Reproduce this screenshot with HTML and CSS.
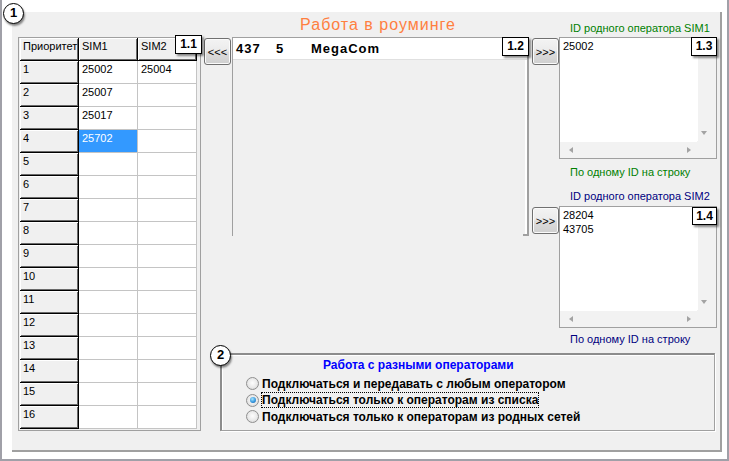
FILE: index.html
```html
<!DOCTYPE html>
<html>
<head>
<meta charset="utf-8">
<link rel="stylesheet" href="styles.css">
</head>
<body>
<div class="frame">
  <div class="num num-1">1</div>
  <div class="panel">
    <div class="grid-wrap">
      <div class="grid">
        <div class="fx">Приоритет</div><div class="fx">SIM1</div><div class="fx">SIM2</div>
        <div class="fx">1</div><div class="c">25002</div><div class="c">25004</div>
        <div class="fx">2</div><div class="c">25007</div><div class="c"></div>
        <div class="fx">3</div><div class="c">25017</div><div class="c"></div>
        <div class="fx">4</div><div class="c sel">25702</div><div class="c"></div>
        <div class="fx">5</div><div class="c"></div><div class="c"></div>
        <div class="fx">6</div><div class="c"></div><div class="c"></div>
        <div class="fx">7</div><div class="c"></div><div class="c"></div>
        <div class="fx">8</div><div class="c"></div><div class="c"></div>
        <div class="fx">9</div><div class="c"></div><div class="c"></div>
        <div class="fx">10</div><div class="c"></div><div class="c"></div>
        <div class="fx">11</div><div class="c"></div><div class="c"></div>
        <div class="fx">12</div><div class="c"></div><div class="c"></div>
        <div class="fx">13</div><div class="c"></div><div class="c"></div>
        <div class="fx">14</div><div class="c"></div><div class="c"></div>
        <div class="fx">15</div><div class="c"></div><div class="c"></div>
        <div class="fx">16</div><div class="c"></div><div class="c"></div>
      </div>
      <div class="tag tag-11">1.1</div>
    </div>
    <div class="side">
      <div class="head">
        <div class="title">Работа в роуминге</div>
        <div class="lbl green head-lbl">ID родного оператора SIM1</div>
      </div>
      <div class="main">
        <div class="mid">
          <div class="btn btn-l">&lt;&lt;&lt;</div>
          <div class="list">
            <div class="item"><span class="f1">437</span><span class="f2">5</span><span>MegaCom</span></div>
            <div class="tag tag-12">1.2</div>
          </div>
          <div class="btncol">
            <div class="btn btn-r1">&gt;&gt;&gt;</div>
            <div class="btn btn-r2">&gt;&gt;&gt;</div>
          </div>
        </div>
        <div class="right">
          <div class="memo">
            <div class="txt">25002</div>
            <div class="vs"><span class="arr-d"></span></div>
            <div class="hs"><span class="arr-l"></span><span class="arr-r"></span></div>
            <div class="corner"></div>
            <div class="tag tag-13">1.3</div>
          </div>
          <div class="lbl green hint1">По одному ID на строку</div>
          <div class="lbl navy cap2">ID родного оператора SIM2</div>
          <div class="memo memo2">
            <div class="txt">28204<br>43705</div>
            <div class="vs"><span class="arr-d"></span></div>
            <div class="hs"><span class="arr-l"></span><span class="arr-r"></span></div>
            <div class="corner"></div>
            <div class="tag tag-14">1.4</div>
          </div>
          <div class="lbl navy hint2">По одному ID на строку</div>
        </div>
      </div>
      <div class="group">
        <div class="num num-2">2</div>
        <div class="gtitle">Работа с разными операторами</div>
        <div class="opt"><span class="radio"></span><span class="otext">Подключаться и передавать с любым оператором</span></div>
        <div class="opt"><span class="radio on"></span><span class="otext focus">Подключаться только к операторам из списка</span></div>
        <div class="opt"><span class="radio"></span><span class="otext">Подключаться только к операторам из родных сетей</span></div>
      </div>
    </div>
  </div>
</div>
</body>
</html>
```
FILE: styles.css
```css
* { box-sizing: border-box; }
html, body { margin: 0; padding: 0; background: #fff; }
body {
  width: 729px; height: 461px; overflow: hidden;
  font-family: "Liberation Sans", Arial, sans-serif;
  font-size: 11px; color: #000;
}
.frame {
  position: relative;
  width: 729px; height: 461px;
  border: 2px solid #a0a0a8; border-top: 0;
  padding: 12px 5px 7px 10px;
}
.panel {
  display: flex;
  width: 710px; height: 440px;
  background: #f0f0f0;
  border-right: 2px solid #a0a0a0;
  border-bottom: 2px solid #a0a0a0;
  padding-left: 6px;
}
.num {
  position: absolute;
  width: 21px; height: 21px;
  border-radius: 50%;
  border: 1.5px solid #000;
  background: #fff;
  box-shadow: 1px 2px 2px rgba(0,0,0,.45);
  font: bold 13px/18px "Liberation Sans", Arial, sans-serif;
  text-align: center;
  z-index: 3;
}
.num-1 { left: 1px; top: 3px; }
.num-2 { left: -12px; top: -10px; }

/* grid */
.grid-wrap {
  position: relative;
  flex: none;
  margin-top: 25px; margin-right: 2px;
  width: 183px; height: 394px;
  border: 1px solid #a0a0a0;
  padding-left: 1px;
}
.grid {
  display: grid;
  grid-template-columns: repeat(3, 59px);
  grid-auto-rows: 23px;
}
.fx, .c {
  padding: 2px 0 0 3px;
  line-height: 13px;
  white-space: nowrap;
  overflow: hidden;
  color: #000;
}
.fx {
  background: #f0f0f0;
  border-right: 1px solid #000;
  border-bottom: 1px solid #000;
  box-shadow: inset 1px 1px 0 #fff, inset -1px -1px 0 #6a6a6a;
}
.c {
  background: #fff;
  border-right: 1px solid #c4c4c4;
  border-bottom: 1px solid #c4c4c4;
}
.c.sel { background: #3399ff; color: #fff; }

/* tags */
.tag {
  position: absolute;
  width: 27px; height: 19px;
  background: #fff;
  border: 1px solid #000;
  box-shadow: 2px 2px 2px rgba(0,0,0,.45);
  font: bold 12px/17px "Liberation Sans", Arial, sans-serif;
  text-align: center;
  z-index: 2;
}
.tag-11 { left: 156px; top: -3px; }
.tag-12 { left: 269px; top: -1px; }
.tag-13 { left: 131px; top: -1px; width: 26px; }
.tag-14 { left: 132px; top: 0; width: 25px; height: 18px; line-height: 16px; }

/* side */
.side { display: flex; flex-direction: column; width: 517px; }
.head { display: flex; height: 25px; }
.title {
  width: 356px;
  padding: 3px 6px 0 0;
  text-align: center;
  font-size: 16px; line-height: 19px;
  letter-spacing: 1px;
  color: #ff7f3f;
}
.lbl {
  font-size: 11px; line-height: 13px;
  padding-left: 11px;
  white-space: nowrap;
}
.head-lbl { padding-top: 10px; }
.green { color: #008000; }
.navy { color: #000080; }

.main { display: flex; height: 308px; }
.mid { display: flex; align-items: flex-start; width: 356px; }
.btn {
  width: 27px; height: 27px;
  border: 1px solid #707070;
  border-radius: 3px;
  background: linear-gradient(#f3f3f3, #ebebeb 48%, #dddddd 52%, #cfcfcf);
  box-shadow: inset 0 0 0 1px #fbfbfb;
  font-size: 11px; line-height: 27px;
  text-align: center;
  flex: none;
}
.btn-l { margin: 1px 0 0 1px; }
.list {
  position: relative;
  margin-left: 1px;
  width: 297px; height: 199px;
  border-top: 1px solid #a0a0a0;
  border-left: 1px solid #a0a0a0;
  border-right: 2px solid #a0a0a0;
  box-shadow: inset -2px 0 0 #fff;
  flex: none;
}
.list::after {
  content: "";
  position: absolute;
  right: -2px; bottom: 0;
  width: 6px; height: 2px;
  background: #a0a0a0;
}
.item {
  display: flex;
  height: 22px;
  background: #fff;
  border-bottom: 1px solid #e0e0e0;
  padding-left: 3px;
  font: bold 13px/21px "Liberation Sans", Arial, sans-serif;
  letter-spacing: 1px;
}
.f1 { width: 40px; }
.f2 { width: 35px; }
.btncol { display: flex; flex-direction: column; margin-left: 3px; }
.btn-r1 { margin-top: 1px; }
.btn-r2 { margin-top: 142px; }

.right { width: 161px; }
.memo {
  position: relative;
  width: 158px; height: 122px;
  border: 1px solid #a0a0a0;
  background: #fff;
  display: grid;
  grid-template-columns: 137px 19px;
  grid-template-rows: 103px 17px;
}
.memo .txt { padding: 1px 0 0 3px; line-height: 14px; }
.vs {
  position: relative;
  background: #f2f2f2;
  border-left: 1px solid #fff;
}
.hs {
  position: relative;
  background: #f2f2f2;
  border-top: 1px solid #fff;
}
.corner { background: #f2f2f2; }
.arr-d {
  position: absolute; left: 3px; bottom: 6px;
  width: 0; height: 0;
  border-left: 3.5px solid transparent;
  border-right: 3.5px solid transparent;
  border-top: 4px solid #a3a3a3;
}
.arr-l, .arr-r {
  position: absolute; top: 5px;
  width: 0; height: 0;
  border-top: 3.5px solid transparent;
  border-bottom: 3.5px solid transparent;
}
.arr-l { left: 9px; border-right: 4px solid #a3a3a3; }
.arr-r { left: 127px; border-left: 4px solid #a3a3a3; }
.hint1 { margin-top: 7px; }
.cap2 { margin-top: 11px; }
.memo2 { margin-top: 2.5px; }
.hint2 { margin-top: 5.5px; }

/* group */
.group {
  position: relative;
  margin: 8px 0 0 17px;
  width: 495px; height: 78px;
  border-top: 2px solid #8c8c8c;
  border-left: 2px solid #8c8c8c;
  border-right: 1px solid #a0a0a0;
  border-bottom: 1px solid #a0a0a0;
  box-shadow: inset 1px 1px 0 #fff, 1px 1px 0 #fff;
  padding: 2.5px 0 0 24px;
}
.gtitle {
  margin: 0 0 4px 77px;
  font: bold 12px/14px "Liberation Sans", Arial, sans-serif;
  color: #0000ff;
}
.opt {
  display: flex; align-items: center;
  height: 16.5px;
  font: bold 12px/14px "Liberation Sans", Arial, sans-serif;
}
.radio {
  position: relative;
  flex: none;
  width: 13px; height: 13px;
  margin-right: 3px;
  border-radius: 50%;
  border: 1px solid #8f8f8f;
  background: radial-gradient(circle at 50% 45%, #fdfdfd 0, #e9e9e9 55%, #cfcfcf 100%);
}
.radio.on::after {
  content: "";
  position: absolute;
  left: 2.5px; top: 2.5px;
  width: 6px; height: 6px;
  border-radius: 50%;
  background: radial-gradient(circle at 40% 35%, #a6e6ff, #2d90da 60%, #0d4c92);
}
.otext { white-space: nowrap; }
.focus { outline: 1px dotted #000; }
```
